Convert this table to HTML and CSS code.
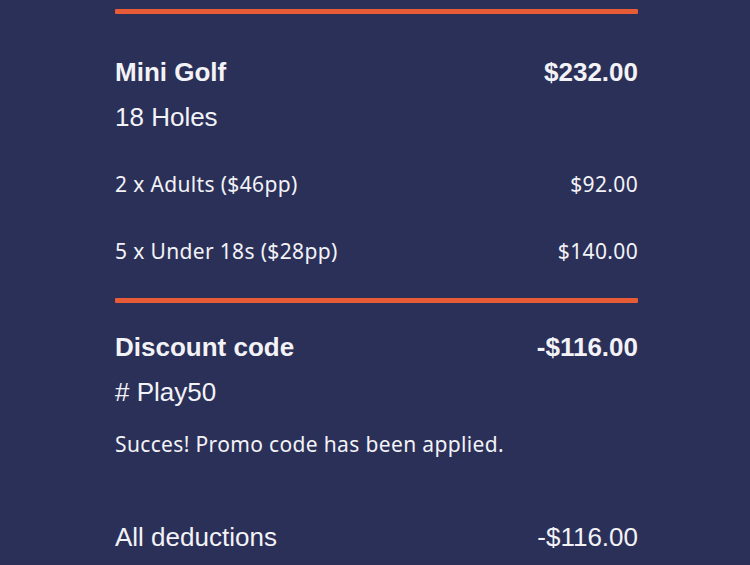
FILE: index.html
```html
<!DOCTYPE html>
<html lang="en">
<head>
<meta charset="utf-8">
<title>Order summary</title>
<link rel="stylesheet" href="styles.css">
</head>
<body>
<main class="summary">
  <div class="rule rule-top"></div>
  <section class="block block-first">
    <div class="row head">
      <span class="title">Mini Golf</span>
      <span class="price">$232.00</span>
    </div>
    <div class="sub">18 Holes</div>
    <div class="row item item-first">
      <span>2 x Adults ($46pp)</span>
      <span>$92.00</span>
    </div>
    <div class="row item item-second">
      <span>5 x Under 18s ($28pp)</span>
      <span>$140.00</span>
    </div>
  </section>
  <div class="rule rule-mid"></div>
  <section class="block block-second">
    <div class="row head">
      <span class="title">Discount code</span>
      <span class="price">-$116.00</span>
    </div>
    <div class="sub"># Play50</div>
    <div class="note">Succes! Promo code has been applied.</div>
    <div class="row total">
      <span>All deductions</span>
      <span>-$116.00</span>
    </div>
  </section>
</main>
</body>
</html>
```
FILE: styles.css
```css
html, body {
  margin: 0;
  padding: 0;
  background: #2b3059;
  height: 100%;
  overflow: hidden;
}

.summary {
  width: 523px;
  margin-left: 115px;
  color: #f3f3f7;
  font-family: "Liberation Sans", Arial, sans-serif;
}

.rule {
  height: 5px;
  background: #e75b36;
  border-radius: 1px;
}

.rule-top {
  margin-top: 9px;
}

.rule-mid {
  margin-top: 34px;
}

.block-first {
  padding-top: 43px;
}

.block-second {
  padding-top: 29px;
}

.row {
  display: flex;
  justify-content: space-between;
  align-items: baseline;
}

.head {
  font-size: 26px;
  line-height: 30px;
  font-weight: 700;
}

.sub {
  margin-top: 15px;
  font-size: 26px;
  line-height: 30px;
}

.item,
.note {
  font-family: "Noto Sans", "Lato", sans-serif;
  font-size: 21px;
  line-height: 26px;
  letter-spacing: 0.35px;
}

.item-first {
  margin-top: 39px;
}

.item-second {
  margin-top: 41px;
}

.note {
  margin-top: 24px;
}

.total {
  margin-top: 65px;
  font-size: 26px;
  line-height: 30px;
}
```
